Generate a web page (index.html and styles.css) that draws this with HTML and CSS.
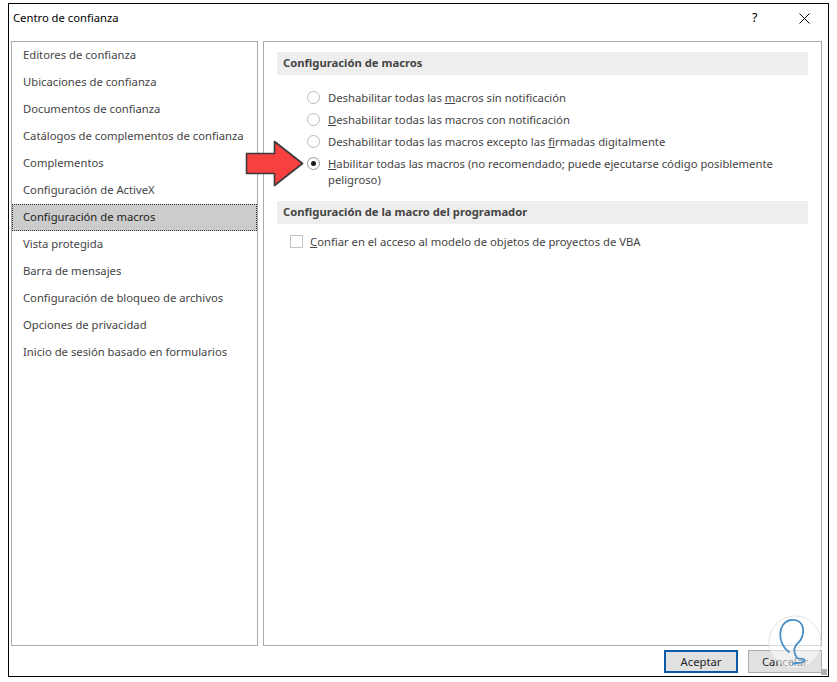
FILE: index.html
```html
<!DOCTYPE html>
<html lang="es">
<head>
<meta charset="utf-8">
<title>Centro de confianza</title>
<link rel="stylesheet" href="styles.css">
</head>
<body>
<div class="dialog">
  <div class="titlebar">
    <span class="title">Centro de confianza</span>
    <span class="help">?</span>
    <svg class="close" width="11" height="11" viewBox="0 0 11 11"><path d="M0.5 0.5 L10.5 10.5 M10.5 0.5 L0.5 10.5" stroke="#000" stroke-width="1" fill="none"/></svg>
  </div>
  <div class="body">
    <ul class="nav">
      <li>Editores de confianza</li>
      <li>Ubicaciones de confianza</li>
      <li>Documentos de confianza</li>
      <li>Catálogos de complementos de confianza</li>
      <li>Complementos</li>
      <li>Configuración de ActiveX</li>
      <li class="active">Configuración de macros</li>
      <li>Vista protegida</li>
      <li>Barra de mensajes</li>
      <li>Configuración de bloqueo de archivos</li>
      <li>Opciones de privacidad</li>
      <li>Inicio de sesión basado en formularios</li>
    </ul>
    <div class="content">
      <div class="section-head">Configuración de macros</div>
      <div class="options">
        <div class="opt"><span class="radio"></span><span class="label">Deshabilitar todas las <u>m</u>acros sin notificación</span></div>
        <div class="opt"><span class="radio"></span><span class="label key-first">Deshabilitar todas las macros con notificación</span></div>
        <div class="opt"><span class="radio"></span><span class="label">Deshabilitar todas las macros excepto las <u>f</u>irmadas digitalmente</span></div>
        <div class="opt"><span class="radio checked"></span><span class="label key-first">Habilitar todas las macros (no recomendado; puede ejecutarse código posiblemente peligroso)</span></div>
      </div>
      <div class="section-head">Configuración de la macro del programador</div>
      <div class="check-row"><span class="checkbox"></span><span class="label key-first">Confiar en el acceso al modelo de objetos de proyectos de VBA</span></div>
    </div>
  </div>
  <div class="footer">
    <button class="btn primary">Aceptar</button>
    <button class="btn">Cancelar</button>
  </div>
  <span class="grip"></span>
  <svg class="arrow" width="60" height="48" viewBox="0 0 60 48">
    <path d="M1.5 13.5 H29.5 V1.5 L57.5 23.5 L29.5 45.5 V33.5 H1.5 Z" fill="#f74040" stroke="#3a3a3a" stroke-width="1.6" stroke-linejoin="round"/>
  </svg>
  <svg class="watermark" width="56" height="56" viewBox="0 0 56 56">
    <circle cx="28" cy="28" r="26" fill="#ffffff" fill-opacity="0.55" stroke="#e2e2e2" stroke-width="1"/>
    <path d="M22 38 C10 30 10 8 24 6 C38 4 40 22 30 30 C26 34 27 40 30 44 C34 46 40 43 36 48 C33 50 28 48 26 50" fill="none" stroke="#4a90c8" stroke-width="1.8" stroke-linecap="round"/>
  </svg>
</div>
</body>
</html>
```

FILE: styles.css
```css
* { box-sizing: border-box; }
html, body { margin: 0; padding: 0; background: #ffffff; }
body {
  font-family: "Noto Sans", "Open Sans", sans-serif;
  font-size: 11.25px;
  color: #444444;
}
.dialog {
  position: relative;
  margin: 3px 0 0 8px;
  width: 821px;
  height: 674px;
  border: 1px solid #000000;
  background: #ffffff;
  display: flex;
  flex-direction: column;
}
.titlebar {
  height: 37px;
  display: flex;
  align-items: flex-start;
  padding: 6px 0 0 4px;
  color: #000000;
}
.title { flex: 1; }
.help { width: 47px; font-size: 12.5px; margin-top: -1px; }
.close { margin: 3px 18px 0 0; }
.body {
  display: flex;
  gap: 5px;
  padding: 0 6px 0 2px;
  height: 605px;
}
.nav {
  list-style: none;
  margin: 0;
  padding: 0;
  width: 247px;
  border: 1px solid #ababab;
}
.nav li {
  height: 27px;
  line-height: 23px;
  padding-left: 10px;
  white-space: nowrap;
  border: 1px dotted transparent;
}
.nav li.active {
  background: #cccccc;
  border: 1px dotted #333333;
  color: #222222;
}
.content {
  flex: 1;
  border: 1px solid #ababab;
  padding: 10px 13px 0 13px;
}
.section-head {
  background: #eeeeee;
  height: 23px;
  line-height: 21px;
  padding-left: 6px;
  font-weight: bold;
  color: #444444;
}
.options {
  padding: 15px 0 14px 30px;
  display: flex;
  flex-direction: column;
  gap: 4px;
}
.opt {
  display: flex;
  align-items: flex-start;
  line-height: 15.5px;
  min-height: 18px;
}
.radio {
  flex: none;
  width: 13px;
  height: 13px;
  border: 1px solid #b9b9b9;
  border-radius: 50%;
  margin: 1px 8px 0 0;
  background: #ffffff;
  position: relative;
}
.radio.checked { border-color: #9a9a9a; }
.radio.checked::after {
  content: "";
  position: absolute;
  left: 3px; top: 3px;
  width: 5px; height: 5px;
  border-radius: 50%;
  background: #1a1a1a;
}
.label { color: #444444; display: block; }
.label u { text-decoration-thickness: 1px; text-underline-offset: 1px; }
.key-first::first-letter {
  text-decoration: underline;
  text-decoration-thickness: 1px;
  text-underline-offset: 1px;
}
.check-row {
  display: flex;
  align-items: center;
  padding: 10px 0 0 13px;
}
.checkbox {
  flex: none;
  width: 13px;
  height: 13px;
  border: 1px solid #c4c4c4;
  margin-right: 7px;
  background: #ffffff;
}
.footer {
  display: flex;
  justify-content: flex-end;
  gap: 10px;
  padding: 4px 6px 0 0;
}
.btn {
  width: 74px;
  height: 23px;
  font-family: inherit;
  font-size: 11.25px;
  color: #222222;
  background: #e1e1e1;
  border: 1px solid #adadad;
  padding: 0;
}
.btn.primary { border: 2px solid #0a5ba6; }
.grip {
  position: absolute;
  right: 1px;
  bottom: 1px;
  width: 6px;
  height: 6px;
  background-image: radial-gradient(#b0b0b0 0.8px, transparent 1px);
  background-size: 2px 2px;
}
.arrow {
  position: absolute;
  left: 236px;
  top: 136px;
}
.watermark {
  position: absolute;
  left: 758px;
  top: 610px;
}
```
